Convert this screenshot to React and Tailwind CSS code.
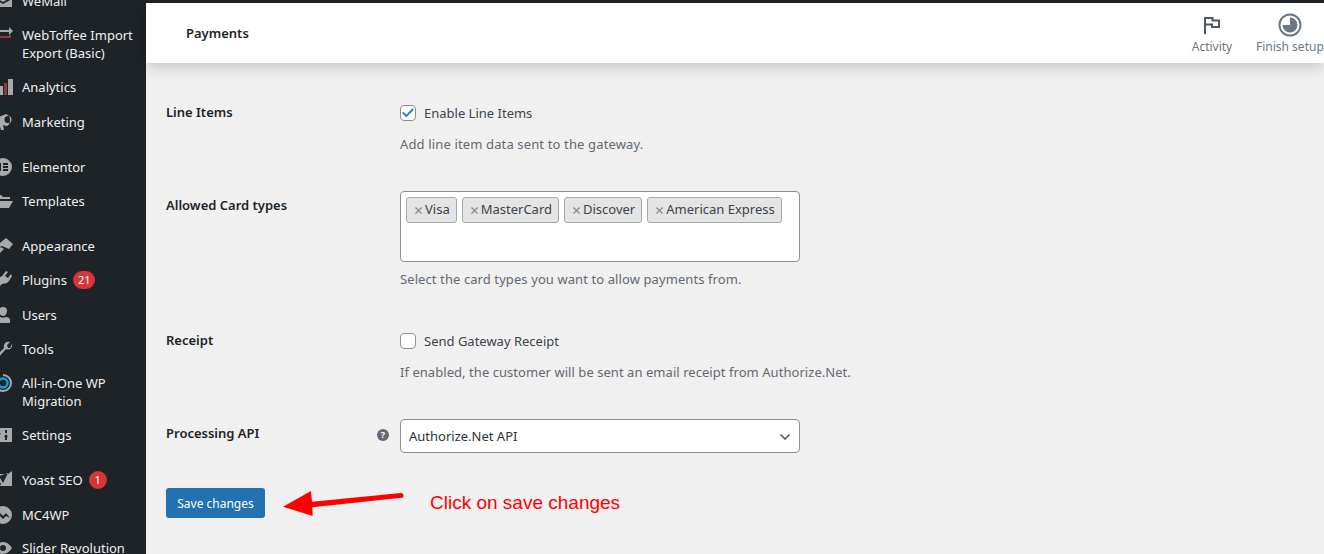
import { ChevronDown, Check, X } from "lucide-react";

const font = "font-['Noto_Sans',sans-serif]";

const Ic = ({ children }) => (
  <svg viewBox="0 0 20 20" className="absolute left-[-7px] top-[7px] h-5 w-5 fill-[#a7aaad]">
    {children}
  </svg>
);

const menu = [
  { label: "WeMail", h: "h-[35px]", icon: <path d="M1 4h18v3l-9 5-9-5zM1 9l9 5 9-5v8H1z" /> },
  {
    label: ["WebToffee Import", "Export (Basic)"],
    h: "h-[52px]",
    icon: (
      <>
        <path d="M4 5h12V2l4 4-4 4V7H6v2H4z" />
        <path d="M4 11h12v-1h2v3H6v2l-4-3z" fill="#8a3a3f" />
      </>
    ),
  },
  {
    label: "Analytics",
    h: "h-[34px] mb-[1px]",
    icon: (
      <>
        <path d="M7 9h3v9H7zM15 2h5v16h-5z" />
        <path d="M11 6h3v12h-3z" fill="#8a3a3f" />
      </>
    ),
  },
  {
    label: "Marketing",
    h: "h-[34px] mb-[11px]",
    icon: <path fillRule="evenodd" d="M1 7l12-5c2 1 4 2 4 6s-2 6-4 6L10 13l1 5H8l-2-6H1zM15 4a3 3 0 0 0 0 7 3 3 0 0 0 0-7z" />,
  },
  {
    label: "Elementor",
    h: "h-[34px]",
    icon: <path fillRule="evenodd" d="M10 1a9 9 0 1 0 0 18 9 9 0 0 0 0-18zM6 6h2v8H6zM10 6h5v2h-5zM10 9h5v2h-5zM10 12h5v2h-5z" />,
  },
  { label: "Templates", h: "h-[34px] mb-[11px]", icon: <path d="M1 4h7l2 2h7v2H5l-4 8zM6 10h14l-4 7H2z" /> },
  { label: "Appearance", h: "h-[34px]", icon: <path d="M13 2l7 6-4 5-7-3-5 2 3-5zM8 11l3 2-5 5-4-2z" /> },
  {
    label: "Plugins",
    badge: "21",
    h: "h-[34px] mb-[1px]",
    icon: <path d="M13 1l2 1-3 4 3 2 3-4 1 2-3 5-2 2-5 1-4 4-2-2 4-4-1-4 3-2z" />,
  },
  {
    label: "Users",
    h: "h-[34px]",
    icon: <path d="M10 2a4 4 0 0 1 4 4c0 3-2 5-4 5S6 9 6 6a4 4 0 0 1 4-4zM3 14c2-2 4-2 4-2 2 1 4 1 6 0 0 0 2 0 4 2v4H3z" />,
  },
  {
    label: "Tools",
    h: "h-[34px]",
    icon: <path d="M19 5c1 3-2 7-6 5l-7 8c-2 1-3-1-2-2l7-7c-1-4 2-7 6-6l-3 3 1 3 2 0z" />,
  },
  {
    label: ["All-in-One WP", "Migration"],
    h: "h-[52px]",
    icon: (
      <>
        <path d="M10 1a9 9 0 1 1-9 9h2a7 7 0 1 0 7-7z" />
        <circle cx="10" cy="10" r="4.5" fill="none" stroke="#0a9fd8" strokeWidth="2.5" />
      </>
    ),
  },
  {
    label: "Settings",
    h: "h-[34px] mb-[11px]",
    icon: <path fillRule="evenodd" d="M1 3h18v14H1zM5 5v3H4l2 3 2-3H7V5zM5 12v3h2v-3zM12 5v3h2V5zM13 9l-2 3h1v3h2v-3h1z" />,
  },
  {
    label: "Yoast SEO",
    badge: "1",
    h: "h-[34px] mb-[1px]",
    icon: <path fillRule="evenodd" d="M3 4h12l4-3v15H7l-2 3 3-5-5-9zM6 6l4 7 5-10z" />,
  },
  {
    label: "MC4WP",
    h: "h-[33px]",
    icon: <path fillRule="evenodd" d="M10 1a9 9 0 1 1 0 18 9 9 0 0 1 0-18zM3 13l4-5 3 3 3-3 4 5-4-2-3 3-3-3z" />,
  },
  {
    label: "Slider Revolution",
    h: "h-[34px]",
    icon: <path fillRule="evenodd" d="M10 4c4 0 7 3 9 6-2 3-5 6-9 6s-7-3-9-6c2-3 5-6 9-6zM10 7a3 3 0 1 0 0 6 3 3 0 0 0 0-6z" />,
  },
];

const Sidebar = () => (
  <aside className="h-[554px] w-[146px] shrink-0 overflow-hidden bg-[#1d2327] text-[13px] leading-[18px] text-[#f0f0f1]">
    <div className="mt-[-17px]">
      {menu.map((item) => (
        <div key={String(item.label)} className={`relative flex items-center pl-[22px] ${item.h}`}>
          <Ic>{item.icon}</Ic>
          <span className="whitespace-nowrap">
            {Array.isArray(item.label)
              ? item.label.map((line) => <span key={line} className="block">{line}</span>)
              : item.label}
          </span>
          {item.badge && (
            <span className="ml-[6px] flex h-[18px] min-w-[18px] items-center justify-center rounded-full bg-[#d63638] px-[5px] text-[11px] text-white">
              {item.badge}
            </span>
          )}
        </div>
      ))}
    </div>
  </aside>
);

const Header = () => (
  <header className="flex h-[60px] items-center justify-between bg-white pl-10 shadow-[0_4px_14px_rgba(0,0,0,0.18)]">
    <h1 className="mt-[2px] text-[13px] font-semibold text-[#1d2327]">Payments</h1>
    <div className="flex w-[145px] shrink-0 self-stretch text-[12px] leading-[18px] text-[#6c7781]">
      <div className="flex w-[66px] shrink-0 flex-col items-center pt-[14px]">
        <svg viewBox="0 0 16 17" className="h-[17px] w-4 fill-none stroke-[#50575e] stroke-2">
          <path d="M1 17V1h7.5v2.5H15V10H8V7.5H1" />
        </svg>
        <span className="mt-[4px]">Activity</span>
      </div>
      <div className="ml-[11px] flex shrink-0 flex-col items-center whitespace-nowrap pt-[10px]">
        <svg viewBox="0 0 24 24" className="h-6 w-6">
          <circle cx="12" cy="12" r="10.5" fill="none" stroke="#6c7781" strokeWidth="2" />
          <path d="M12 4.5A7.5 7.5 0 1 1 4.5 12H12z" fill="#6c7781" />
        </svg>
        <span className="mt-[1px]">Finish setup</span>
      </div>
    </div>
  </header>
);

const Row = ({ label, help, className, labelClass, children }) => (
  <div className={`grid grid-cols-[234px_400px] ${className}`}>
    <div className={`relative text-[13px] font-semibold leading-[18px] text-[#1d2327] ${labelClass}`}>
      {label}
      {help && (
        <span className="absolute left-[211px] top-[5px] flex h-3 w-3 items-center justify-center rounded-full bg-[#646970] text-[9px] font-bold text-white">
          ?
        </span>
      )}
    </div>
    <div>{children}</div>
  </div>
);

const Desc = ({ children, className }) => (
  <p className={`whitespace-nowrap text-[13px] leading-[18px] text-[#646970] ${className}`}>{children}</p>
);

const CheckBox = ({ label, checked, className }) => (
  <label className={`flex items-center gap-2 text-[13px] leading-[18px] text-[#3c434a] ${className}`}>
    <span className="flex h-4 w-4 items-center justify-center rounded-[4px] border border-[#8c8f94] bg-white">
      {checked && <Check className="h-[14px] w-[14px] text-[#3582c4]" strokeWidth={3.5} />}
    </span>
    {label}
  </label>
);

const cards = ["Visa", "MasterCard", "Discover", "American Express"];

export default function App() {
  return (
    <div className={`flex h-[554px] w-[1324px] overflow-hidden bg-[#f0f0f1] ${font}`}>
      <Sidebar />
      <main className="relative min-w-0 flex-1">
        <div className="h-[3px] bg-[#1d2327]" />
        <Header />
        <div className="pl-5 pt-[41px]">
          <Row label="Line Items" labelClass="mt-[-1px]">
            <CheckBox label="Enable Line Items" checked />
            <Desc className="mt-[13px] tracking-[0.14px]">Add line item data sent to the gateway.</Desc>
          </Row>

          <Row label="Allowed Card types" className="mt-[43px]">
            <div className="mt-[-5px] h-[71px] w-[400px] rounded-[4px] border border-[#8c8f94] bg-white pl-[5px] pt-[5px]">
              <div className="flex gap-[5px]">
                {cards.map((card) => (
                  <span
                    key={card}
                    className="flex h-[26px] items-center rounded-[3px] border border-[#a7aaad] bg-[#e4e4e4] pl-[6px] pr-[6px] text-[13px] text-[#3c434a]"
                  >
                    <X className="mr-[1px] h-[11px] w-[11px] text-[#888]" strokeWidth={2.5} />
                    {card}
                  </span>
                ))}
              </div>
            </div>
            <Desc className="mt-[8px] tracking-[0.09px]">Select the card types you want to allow payments from.</Desc>
          </Row>

          <Row label="Receipt" className="mt-[43px]">
            <CheckBox label="Send Gateway Receipt" className="mt-[1px]" />
            <Desc className="mt-[13px] tracking-[0.05px]">If enabled, the customer will be sent an email receipt from Authorize.Net.</Desc>
          </Row>

          <Row label="Processing API" help className="mt-[43px]">
            <div className="mt-[-5px] flex h-[34px] w-[400px] items-center justify-between rounded-[4px] border border-[#8c8f94] bg-white pl-2 pr-[6px] pt-[1px] text-[13px] text-[#2c3338]">
              Authorize.Net API
              <ChevronDown className="h-4 w-4 text-[#50575e]" strokeWidth={2.5} />
            </div>
          </Row>

          <div className="mt-[35px] flex items-center">
            <button className="h-[30px] w-[99px] rounded-[3px] bg-[#2271b1] pt-[1px] text-[12px] text-white">Save changes</button>
            <svg viewBox="0 0 122 30" className="ml-[18px] h-[30px] w-[122px] fill-[#ff0000]">
              <path d="M0 18.7L28 3l1 10.7L118 5c3 0 3.5 4.5 .7 4.7L29.3 19.3l.4 8.7z" />
            </svg>
            <span className="ml-[25px] font-['Liberation_Sans',sans-serif] text-[19px] text-[#ff0000]">Click on save changes</span>
          </div>
        </div>
      </main>
    </div>
  );
}
